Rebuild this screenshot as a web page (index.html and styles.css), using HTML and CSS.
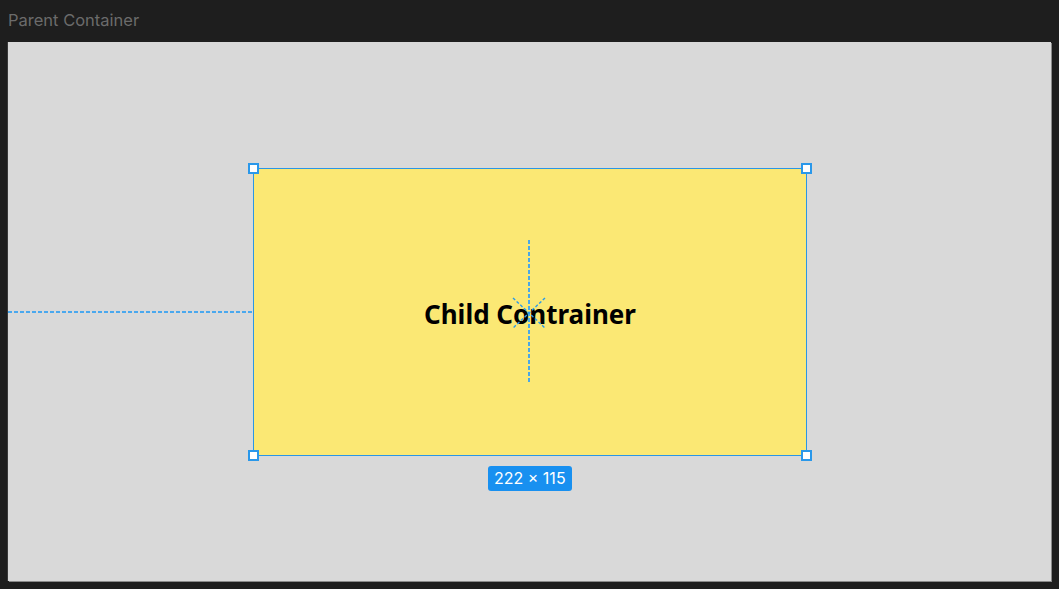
FILE: index.html
```html
<!DOCTYPE html>
<html lang="en">
<head>
    <meta charset="UTF-8">
    <title>Parent Container</title>
    <link rel="stylesheet" href="styles.css">
</head>
<body>
<div class="title">Parent Container</div>
<div class="canvas">
    <div class="guideLeft"></div>
    <div class="child">
        <span class="label">Child Contrainer</span>
        <div class="guideV"></div>
        <svg class="star" width="34" height="32" viewBox="0 0 34 32">
            <g stroke="#2a9ae8" stroke-width="1.4" stroke-dasharray="3 2" fill="none">
                <line x1="1" y1="1" x2="33" y2="31"/>
                <line x1="33" y1="1" x2="1" y2="31"/>
            </g>
        </svg>
        <i class="handle tl"></i>
        <i class="handle tr"></i>
        <i class="handle bl"></i>
        <i class="handle br"></i>
        <div class="size">222 × 115</div>
    </div>
</div>
</body>
</html>
```

FILE: styles.css
```css
body{
    margin: 0;
    height: 589px;
    background-color: #1e1e1e;
    font-family: Inter, "Noto Sans", sans-serif;
    overflow: hidden;
}
.title{
    height: 42px;
    padding-left: 8px;
    line-height: 40px;
    font-size: 16.5px;
    color: #6b6b6b;
}
.canvas{
    position: relative;
    width: 1043px;
    height: 539px;
    margin-left: 8px;
    background-color: #d9d9d9;
    box-shadow: 1px 1px 0 #8a8a8a, -1px 0 0 #3a3a3a;
}
.guideLeft{
    position: absolute;
    left: 0;
    top: 269px;
    width: 245px;
    height: 2px;
    background: repeating-linear-gradient(90deg, #4aa8ee 0 4px, transparent 4px 6px);
}
.child{
    position: absolute;
    left: 245px;
    top: 126px;
    width: 552px;
    height: 286px;
    border: 1px solid #2a96e6;
    background-color: #fbe874;
    display: flex;
    align-items: center;
    justify-content: center;
}
.label{
    position: relative;
    top: 2px;
    font-family: "Noto Sans", sans-serif;
    font-weight: bold;
    font-size: 26px;
    color: #000;
}
.guideV{
    position: absolute;
    left: 274px;
    top: 71px;
    width: 2px;
    height: 143px;
    background: repeating-linear-gradient(180deg, #4aa8e6 0 4px, transparent 4px 6px);
}
.star{
    position: absolute;
    left: 258px;
    top: 128px;
}
.handle{
    position: absolute;
    width: 7px;
    height: 7px;
    background: #fff;
    border: 2px solid #2a98ea;
}
.tl{ left: -6px; top: -6px; }
.tr{ right: -6px; top: -6px; }
.bl{ left: -6px; bottom: -6px; }
.br{ right: -6px; bottom: -6px; }
.size{
    position: absolute;
    left: 234px;
    top: 297px;
    padding: 0 6px;
    height: 25px;
    line-height: 25px;
    border-radius: 3px;
    background-color: #1890f0;
    color: #fff;
    font-size: 16px;
    white-space: nowrap;
}
```
